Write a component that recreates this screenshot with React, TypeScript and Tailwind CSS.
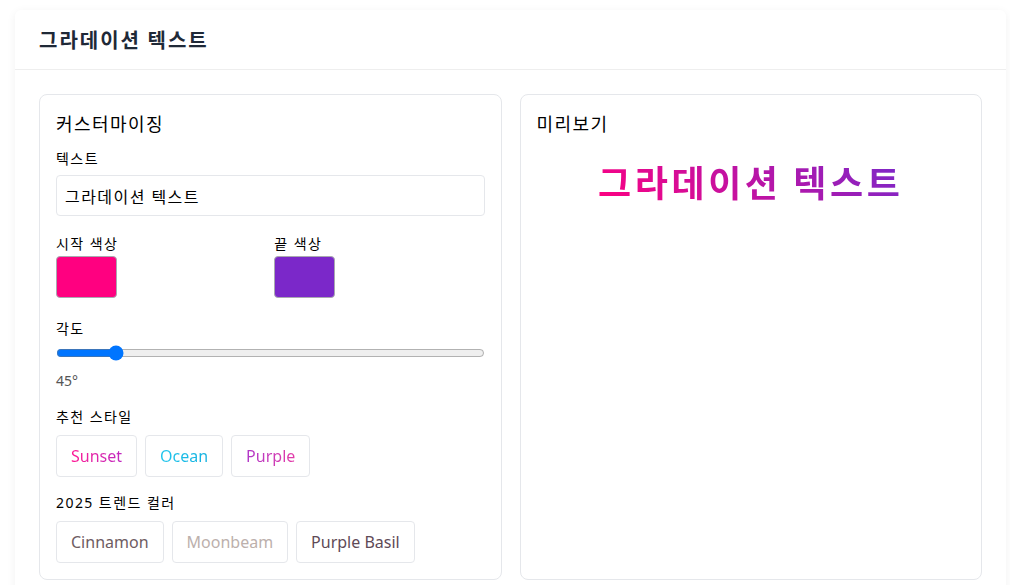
import React, { useState } from 'react';

const presets = [
  { name: 'Sunset', cls: 'bg-gradient-to-r from-[#ff1493] to-[#c026c0]' },
  { name: 'Ocean', cls: 'bg-gradient-to-r from-[#22c6ec] to-[#12b0e0]' },
  { name: 'Purple', cls: 'bg-gradient-to-r from-[#b035c8] to-[#e33aa8]' },
];

const trends = [
  { name: 'Cinnamon', cls: 'text-[#6e5c62]' },
  { name: 'Moonbeam', cls: 'text-[#bcb0ac]' },
  { name: 'Purple Basil', cls: 'text-[#5f4a57]' },
];

const App: React.FC = () => {
  const [text, setText] = useState('그라데이션 텍스트');
  const [angle, setAngle] = useState(45);
  const start = '#ff0080';
  const end = '#7928ca';

  return (
    <div className="min-h-screen bg-white pt-[10px] pl-[15px] pr-[4px] text-black tracking-[0.09em] [font-family:'Noto_Sans','Noto_Sans_CJK_KR',sans-serif]">
      <div className="bg-white rounded-md shadow-[0_2px_10px_rgba(0,0,0,0.06)]">
        {/* header */}
        <div className="h-[60px] flex items-center px-6 border-b border-[#eeeeee]">
          <h1 className="text-[20px] font-bold tracking-[0.1em] text-[#1f2937] [font-family:'Noto_Sans_CJK_KR',sans-serif]">그라데이션 텍스트</h1>
        </div>

        <div className="p-6 flex gap-[18px]">
          {/* Customizing */}
          <div className="flex-1 border border-[#e5e7eb] rounded-lg p-4">
            <h2 className="text-[18px] leading-[27px] mb-[10px]">커스터마이징</h2>
            <label className="block text-[14px] leading-[21px] mb-[6px]">텍스트</label>
            <input
              className="w-full h-[41px] border border-[#e5e7eb] rounded px-2 text-[16px] tracking-[0.09em] outline-none"
              value={text}
              onChange={(e) => setText(e.target.value)}
            />

            <div className="grid grid-cols-2 gap-2 mt-[17px]">
              <div>
                <div className="text-[14px] leading-[21px] mb-[2px]">시작 색상</div>
                <div className="w-[61px] h-[42px] rounded border border-[#a9a9b0] bg-[#ff0080]"></div>
              </div>
              <div>
                <div className="text-[14px] leading-[21px] mb-[2px]">끝 색상</div>
                <div className="w-[61px] h-[42px] rounded border border-[#a9a9b0] bg-[#7b28c9]"></div>
              </div>
            </div>

            <div className="text-[14px] leading-[21px] mt-[20px]">각도</div>
            <input
              type="range"
              min={0}
              max={360}
              value={angle}
              onChange={(e) => setAngle(Number(e.target.value))}
              className="w-full block mt-[6px] h-[16px]"
            />
            <div className="text-[14px] leading-[21px] text-[#555555] tracking-normal mt-[9px]">{angle}°</div>

            <div className="text-[14px] leading-[21px] mt-[15px]">추천 스타일</div>
            <div className="flex gap-2 mt-[8px] tracking-normal">
              {presets.map((p) => (
                <button key={p.name} className="h-[42px] px-[14px] border border-[#e5e7eb] rounded bg-white text-[16px]">
                  <span className={`bg-clip-text text-transparent ${p.cls}`}>{p.name}</span>
                </button>
              ))}
            </div>

            <div className="text-[14px] leading-[21px] mt-[15px]">2025 트렌드 컬러</div>
            <div className="flex gap-2 mt-[8px] tracking-normal">
              {trends.map((t) => (
                <button key={t.name} className={`h-[42px] px-[14px] border border-[#e5e7eb] rounded bg-white text-[16px] ${t.cls}`}>
                  {t.name}
                </button>
              ))}
            </div>
          </div>

          {/* Preview */}
          <div className="flex-1 border border-[#e5e7eb] rounded-lg p-4">
            <h2 className="text-[18px] leading-[27px]">미리보기</h2>
            <div className="text-center mt-[21px]">
              <span
                className="inline-block text-[36px] leading-[44px] font-bold tracking-[0.1em] bg-clip-text text-transparent [font-family:'Noto_Sans_CJK_KR',sans-serif]"
                style={{ backgroundImage: `linear-gradient(${angle}deg, ${start}, ${end})` }}
              >
                {text}
              </span>
            </div>
          </div>
        </div>
      </div>
    </div>
  );
};

export default App;
